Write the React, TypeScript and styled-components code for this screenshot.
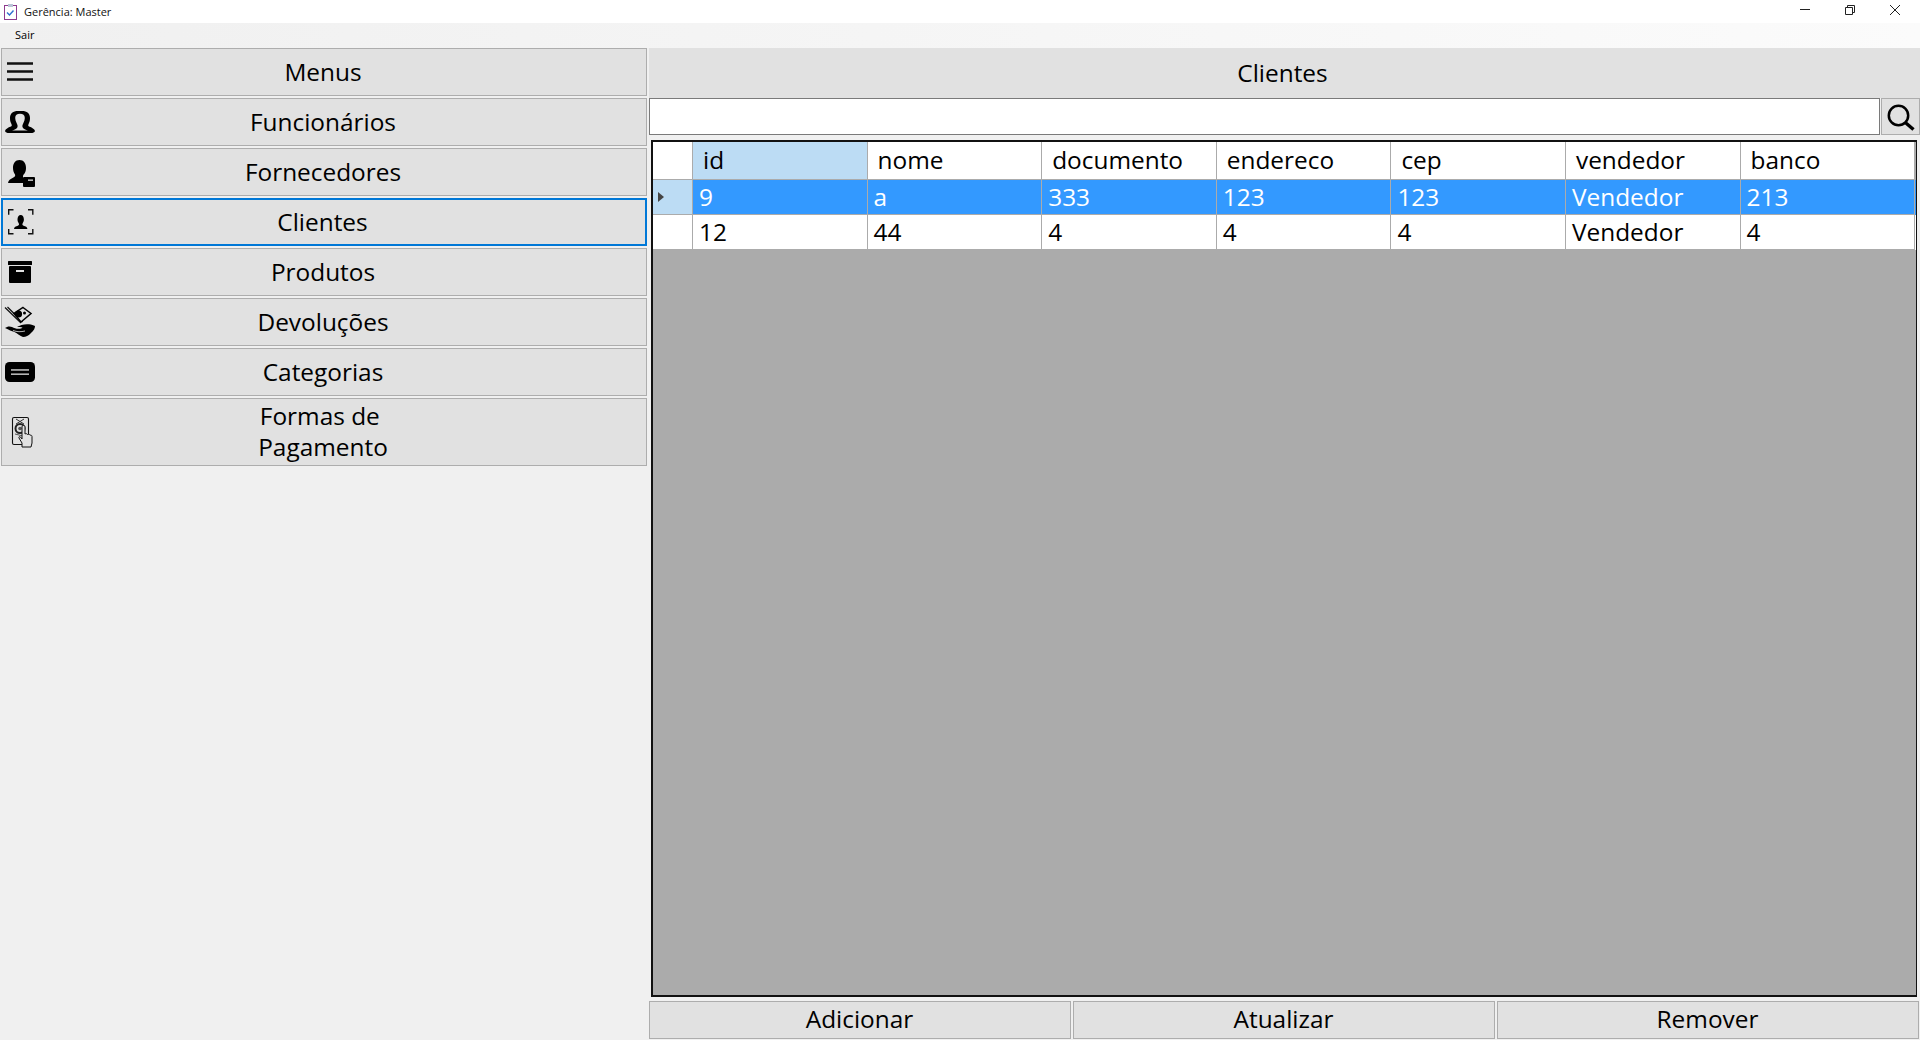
import React from 'react';
import styled, { createGlobalStyle } from 'styled-components';

const GlobalStyle = createGlobalStyle`
  html, body {
    margin: 0;
    padding: 0;
    background: #f0f0f0;
    overflow: hidden;
  }
  * {
    box-sizing: border-box;
  }
`;

const FONT = `"Open Sans", "Noto Sans", "Liberation Sans", sans-serif`;

const columns = ['id', 'nome', 'documento', 'endereco', 'cep', 'vendedor', 'banco'];
const rows = [
  ['9', 'a', '333', '123', '123', 'Vendedor', '213'],
  ['12', '44', '4', '4', '4', 'Vendedor', '4'],
];

// all side icons share one 36x36 box
const Icon = ({ children }: { children: React.ReactNode }) => (
  <svg width="36" height="36" viewBox="0 0 36 36">
    {children}
  </svg>
);

const MenuIcon = () => (
  <Icon>
    <path d="M4 9.500h26M4 17.500h26M4 25.500h26" stroke="#111" strokeWidth="2.400" fill="none" />
  </Icon>
);

const PeopleIcon = () => (
  <Icon>
    <path
      fill="#000"
      d="M2 27c.5-2 3-3.500 6-4.500 1-.5 1-1.500.3-2.800C7.300 18 7 16 7 14c0-4.500 3-7 8-7h4c5 0 8 2.500 8 7 0 2-.3 4-1.300 5.700-.7 1.300-.7 2.300.3 2.800 3 1 5.500 2.500 6 4.500-.5 1.500-2 2-4 2H6c-2 0-3.500-.5-4-2z"
    />
    <path
      fill="#e1e1e1"
      d="M9 26.500c2.500-.6 4.500-1.500 5.300-3 .6-1.200.3-2.700-.6-4.300-1-1.700-1.500-3.500-1.500-5.200 0-2.800 1.800-4.200 4.800-4.200s4.800 1.400 4.800 4.200c0 1.700-.5 3.500-1.500 5.200-.9 1.600-1.200 3.100-.6 4.300.8 1.500 2.800 2.400 5.300 3z"
    />
  </Icon>
);

const SupplierIcon = () => (
  <Icon>
    <path
      fill="#000"
      d="M5 29c.3-2.500 2.500-4.300 5-5.300 2-.8 2.500-1.700 2-3.200-1.300-2-2-4-2-6.500 0-4.500 2.300-8 6.500-8s6.500 3.500 6.500 8c0 2-.5 4-1.500 5.500-.8 1-1.500 1.500-1.500 3V29z"
    />
    <rect x="20" y="23" width="12" height="10" rx="1" fill="#000" />
    <rect x="25" y="25.500" width="5" height="1.300" fill="#e1e1e1" />
  </Icon>
);

const ClientIcon = () => (
  <Icon>
    <path
      d="M10.500 5.700H5.700v5M25 5.700h4.800v5M5.700 25v4.800h4.800M29.800 25v4.800H25"
      stroke="#111"
      strokeWidth="1.400"
      fill="none"
    />
    <path
      fill="#000"
      d="M11 25c0-2 2-2.700 3.800-3.300 1.300-.5 1.500-1.300.9-2.500-.7-1.100-1.200-2.200-1.200-3.700 0-2.400 1.200-4.500 3.200-4.500s3.200 2.100 3.200 4.500c0 1.500-.5 2.600-1.200 3.700-.6 1.200-.4 2 .9 2.500 1.800.6 3.800 1.300 3.800 3.300z"
    />
  </Icon>
);

const ArchiveIcon = () => (
  <Icon>
    <rect x="5" y="7" width="24" height="4" rx="0.500" fill="#000" />
    <rect x="6" y="12" width="22" height="17" rx="1" fill="#000" />
    <rect x="13" y="16" width="8" height="2" fill="#e1e1e1" />
  </Icon>
);

const ReturnIcon = () => (
  <Icon>
    <path d="M2 3.500l16 15.500M4.500 3l15 15" stroke="#111" strokeWidth="1.200" fill="none" />
    <path d="M20 3.500l8 6-10 8.500-7-8.500z" fill="#e1e1e1" stroke="#000" strokeWidth="1.500" />
    <circle cx="15.500" cy="10" r="3.600" fill="#000" />
    <circle cx="21.500" cy="9" r="1.500" fill="#000" />
    <path
      fill="#000"
      d="M2 24c2-1.500 4.500-2 7-1 2 1 4 1.800 6.500 1.800 2 0 3.500-.3 4-1.300-1.500-.5-3.500 0-5.500-.7 3-1.600 8-3.200 12-2.500 2.500.4 4.500 1 6 1.700 0 3.500-2.500 5.500-4.500 7.500-2 2-4.500 3.500-7.500 3.500-3-1-5.500-3.500-8.500-5-3-1-5.500-2-9.500-4z"
    />
    <path d="M10 26.500c4 1.500 8 1.500 12 .5" stroke="#e1e1e1" strokeWidth="0.800" fill="none" />
  </Icon>
);

const CategoryIcon = () => (
  <Icon>
    <rect x="2" y="8" width="30" height="20" rx="4.500" fill="#000" />
    <rect x="8" y="15.300" width="18" height="1.300" fill="#e1e1e1" />
    <rect x="8" y="19.500" width="18" height="1.300" fill="#e1e1e1" />
  </Icon>
);

const PaymentIcon = () => (
  <Icon>
    <rect x="9.500" y="3.500" width="16" height="27" rx="1.500" fill="none" stroke="#111" strokeWidth="1.100" />
    <path d="M13 5l8 5M21 5l-8 5" stroke="#333" strokeWidth="1" />
    <circle cx="17" cy="14.500" r="4.500" fill="none" stroke="#222" strokeWidth="2" />
    <circle cx="17" cy="14.500" r="1.800" fill="#555" />
    <path d="M12 20l8 2" stroke="#555" strokeWidth="1" />
    <path
      fill="#e1e1e1"
      stroke="#111"
      strokeWidth="1"
      d="M19 33v-4l-3-5c-.5-1 .5-2 1.500-1l1.500 2V13c0-2 3-2 3 0v7c1-.5 2-.5 2.500.5 1-.5 2-.3 2.500.7 1-.3 2 .2 2 1.300V29l-1 4z"
    />
  </Icon>
);

const SearchIcon = () => (
  <svg width="32" height="32" viewBox="0 0 32 32">
    <circle cx="13.500" cy="14.500" r="9.700" fill="none" stroke="#000" strokeWidth="2.500" />
    <path d="M20.300 21.500L28.500 28.500" stroke="#000" strokeWidth="3.400" fill="none" />
  </svg>
);

const AppIcon = () => (
  <svg width="14" height="16" viewBox="0 0 14 16">
    <rect x="0.500" y="1.500" width="12" height="14" fill="#fff" stroke="#8e3a8e" />
    <rect x="4" y="0" width="5" height="3" fill="#b9c4d6" />
    <path d="M3 8.500l2.500 2.500 4-4.500" stroke="#2f6fd0" strokeWidth="1.400" fill="none" />
  </svg>
);

const menus = [
  { label: 'Funcionários', icon: <PeopleIcon /> },
  { label: 'Fornecedores', icon: <SupplierIcon /> },
  { label: 'Clientes', icon: <ClientIcon />, active: true },
  { label: 'Produtos', icon: <ArchiveIcon /> },
  { label: 'Devoluções', icon: <ReturnIcon /> },
  { label: 'Categorias', icon: <CategoryIcon /> },
  { label: 'Formas de \nPagamento', icon: <PaymentIcon />, tall: true },
];

export default function App() {
  return (
    <Window>
      <GlobalStyle />
      <TitleBar>
        <TitleLeft>
          <AppIcon />
          <TitleText>Gerência: Master</TitleText>
        </TitleLeft>
        <WindowControls>
          <WindowButton>
            <svg width="12" height="12" viewBox="0 0 12 12">
              <path d="M1 5.500h10" stroke="#222" fill="none" />
            </svg>
          </WindowButton>
          <WindowButton>
            <svg width="12" height="12" viewBox="0 0 12 12">
              <path d="M1.500 3.500h7v7h-7zM3.500 3.500v-2h7v7h-2" stroke="#222" fill="none" />
            </svg>
          </WindowButton>
          <WindowButton>
            <svg width="12" height="12" viewBox="0 0 12 12">
              <path d="M1 1l10 10M11 1L1 11" stroke="#222" fill="none" />
            </svg>
          </WindowButton>
        </WindowControls>
      </TitleBar>
      <MenuBar>
        <MenuEntry>Sair</MenuEntry>
      </MenuBar>
      <Body>
        <Sidebar>
          <SideButton>
            <IconSlot>
              <MenuIcon />
            </IconSlot>
            <SideLabel>Menus</SideLabel>
          </SideButton>
          {menus.map((m) => (
            <SideButton key={m.label} $active={m.active} $tall={m.tall}>
              <IconSlot>{m.icon}</IconSlot>
              <SideLabel>{m.label}</SideLabel>
            </SideButton>
          ))}
        </Sidebar>
        <Main>
          <Heading>Clientes</Heading>
          <SearchRow>
            <SearchInput />
            <SearchButton>
              <SearchIcon />
            </SearchButton>
          </SearchRow>
          <GridFrame>
            <HeaderRow>
              <Corner />
              {columns.map((c, i) => (
                <HeaderCell key={c} $selected={i === 0}>
                  {c}
                </HeaderCell>
              ))}
            </HeaderRow>
            {rows.map((r, ri) => (
              <DataRow key={r[0]} $selected={ri === 0}>
                <RowHeader $selected={ri === 0}>{ri === 0 && <RowArrow />}</RowHeader>
                {r.map((v, ci) => (
                  <DataCell key={columns[ci]}>{v}</DataCell>
                ))}
              </DataRow>
            ))}
          </GridFrame>
          <ActionRow>
            <ActionButton>Adicionar</ActionButton>
            <ActionButton>Atualizar</ActionButton>
            <ActionButton>Remover</ActionButton>
          </ActionRow>
        </Main>
      </Body>
    </Window>
  );
}

const Window = styled.div`
  width: 1920px;
  height: 1040px;
  display: flex;
  flex-direction: column;
  background: #f0f0f0;
  font-family: ${FONT};
  color: #000;
`;

const TitleBar = styled.div`
  height: 23px;
  background: #fff;
  display: flex;
  justify-content: space-between;
  align-items: center;
`;

const TitleLeft = styled.div`
  display: flex;
  align-items: center;
  gap: 6px;
  padding-left: 4px;
`;

const TitleText = styled.span`
  font-size: 11px;
  color: #111;
`;

const WindowControls = styled.div`
  display: flex;
  align-self: flex-start;
  padding-right: 3px;
`;

const WindowButton = styled.div`
  width: 45px;
  height: 20px;
  display: flex;
  align-items: center;
  justify-content: center;
`;

const MenuBar = styled.div`
  height: 25px;
  background: linear-gradient(90deg, #f0f0f0, #fbfbfb);
  display: flex;
  align-items: center;
  padding: 0 0 2px 15px;
`;

const MenuEntry = styled.span`
  font-size: 11px;
`;

const Body = styled.div`
  flex: 1;
  display: flex;
  min-height: 0;
`;

const Sidebar = styled.div`
  width: 649px;
  padding-left: 1px;
  display: flex;
  flex-direction: column;
  gap: 2px;
`;

const SideButton = styled.div<{ $active?: boolean; $tall?: boolean }>`
  width: 646px;
  height: ${(p) => (p.$tall ? '68px' : '48px')};
  background: #e1e1e1;
  border: ${(p) => (p.$active ? '2px solid #0078d7' : '1px solid #adadad')};
  padding-left: ${(p) => (p.$active ? '0' : '1px')};
  display: grid;
  grid-template-columns: 37px 1fr 40px;
  align-items: center;
`;

const IconSlot = styled.div`
  display: flex;
  align-items: center;
  justify-content: flex-start;
`;

const SideLabel = styled.div`
  font-size: 24.4px;
  line-height: 31px;
  padding-bottom: 2px;
  text-align: center;
  white-space: pre;
`;

const Main = styled.div`
  flex: 1;
  display: flex;
  flex-direction: column;
  min-width: 0;
`;

const Heading = styled.div`
  height: 50px;
  background: #e1e1e1;
  display: flex;
  align-items: center;
  justify-content: center;
  padding: 0 4px 2px 0;
  font-size: 24.4px;
`;

const SearchRow = styled.div`
  height: 37px;
  display: flex;
  gap: 1px;
`;

const SearchInput = styled.div`
  width: 1231px;
  background: #fff;
  border: 1px solid #7a7a7a;
`;

const SearchButton = styled.div`
  flex: 1;
  background: #e1e1e1;
  border: 1px solid #adadad;
  display: flex;
  align-items: center;
  justify-content: center;
`;

const GridFrame = styled.div`
  margin: 5px 3px 0 2px;
  height: 857px;
  background: #ababab;
  border: 2px solid #111;
  border-width: 2px 1px 2px 2px;
  overflow: hidden;
`;

const HeaderRow = styled.div`
  display: grid;
  grid-template-columns: 40px repeat(7, 174.6px);
  height: 38px;
`;

const Corner = styled.div`
  background: #fff;
  border-right: 1px solid #ababab;
  border-bottom: 1px solid #ababab;
`;

const HeaderCell = styled.div<{ $selected?: boolean }>`
  background: ${(p) => (p.$selected ? '#bcdcf4' : '#fff')};
  border-right: 1px solid #ababab;
  border-bottom: 1px solid #ababab;
  font-size: 24.4px;
  line-height: 36px;
  padding-left: 10px;
`;

const DataRow = styled.div<{ $selected?: boolean }>`
  display: grid;
  grid-template-columns: 40px repeat(7, 174.6px);
  height: 35px;
  background: ${(p) => (p.$selected ? '#3399ff' : '#fff')};
  color: ${(p) => (p.$selected ? '#fff' : '#000')};
`;

const RowHeader = styled.div<{ $selected?: boolean }>`
  background: ${(p) => (p.$selected ? '#bcdcf4' : '#fff')};
  border-right: 1px solid #ababab;
  border-bottom: 1px solid #ababab;
  display: flex;
  align-items: center;
  padding-left: 5px;
`;

const RowArrow = styled.div`
  width: 0;
  height: 0;
  border-left: 6px solid #444;
  border-top: 5px solid transparent;
  border-bottom: 5px solid transparent;
`;

const DataCell = styled.div`
  border-right: 1px solid #ababab;
  border-bottom: 1px solid #ababab;
  font-size: 24.4px;
  line-height: 33px;
  padding-left: 6px;
`;

const ActionRow = styled.div`
  margin-top: 4px;
  height: 38px;
  display: grid;
  grid-template-columns: repeat(3, 422px);
  gap: 2px;
`;

const ActionButton = styled.div`
  background: #e1e1e1;
  border: 1px solid #adadad;
  display: flex;
  align-items: center;
  justify-content: center;
  padding: 0 1px 3px 0;
  font-size: 24.4px;
`;
